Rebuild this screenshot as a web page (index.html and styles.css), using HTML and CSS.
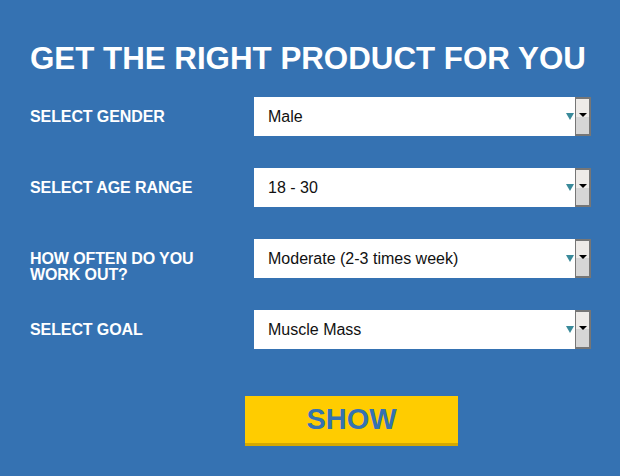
FILE: index.html
```html
<!DOCTYPE html>
<html lang="en">
<head>
  <meta charset="UTF-8" />
  <meta name="viewport" content="width=device-width, initial-scale=1.0"/>
  <title>Product Finder</title>
  <link rel="stylesheet" href="styles.css">
</head>
<body>
  <div class="finder">
    <h1>GET THE RIGHT PRODUCT FOR YOU</h1>

    <div class="form-grid">
      <label for="gender">SELECT GENDER</label>
      <div class="select">
        <select id="gender">
          <option>Male</option>
          <option>Female</option>
        </select>
        <span class="caret"></span>
        <span class="drop"><i></i></span>
      </div>

      <label for="age">SELECT AGE RANGE</label>
      <div class="select">
        <select id="age">
          <option>18 - 30</option>
          <option>31 - 45</option>
          <option>46+</option>
        </select>
        <span class="caret"></span>
        <span class="drop"><i></i></span>
      </div>

      <label for="often">HOW OFTEN DO YOU<br>WORK OUT?</label>
      <div class="select">
        <select id="often">
          <option>Moderate (2-3 times week)</option>
          <option>Rarely</option>
          <option>Often (4+ times week)</option>
        </select>
        <span class="caret"></span>
        <span class="drop"><i></i></span>
      </div>

      <label for="goal">SELECT GOAL</label>
      <div class="select">
        <select id="goal">
          <option>Muscle Mass</option>
          <option>Weight Loss</option>
          <option>Endurance</option>
        </select>
        <span class="caret"></span>
        <span class="drop"><i></i></span>
      </div>
    </div>

    <button class="show-btn">SHOW</button>
  </div>
</body>
</html>
```

FILE: styles.css
```css
body { margin: 0; background: #3572b2; font-family: 'Liberation Sans', Arial, sans-serif; color: #fff; }
.finder { padding: 40px 29px 0 30px; }
h1 { margin: 0; font-size: 31.3px; line-height: 37px; font-weight: bold; white-space: nowrap; }
.form-grid {
  display: grid; grid-template-columns: 224px 337px; grid-auto-rows: 39px;
  row-gap: 32px; margin-top: 20px;
}
.form-grid label {
  font-size: 16px; font-weight: bold; line-height: 16px; padding-top: 12px;
  letter-spacing: -0.1px; white-space: nowrap;
}
.select { display: flex; height: 39px; position: relative; }
.select select {
  flex: 1; appearance: none; -webkit-appearance: none; border: none; border-radius: 0;
  background: #fff; color: #111; font-family: 'Liberation Sans', Arial, sans-serif;
  font-size: 16px; padding: 0 0 0 14px; height: 39px; outline: none;
}
.caret {
  position: absolute; right: 17px; top: 16px; width: 0; height: 0;
  border-left: 4px solid transparent; border-right: 4px solid transparent;
  border-top: 7px solid #3a8a9a; pointer-events: none;
}
.drop {
  width: 13px; border: 2px solid #767676; border-left-width: 1px;
  background: linear-gradient(#eeebe8 0 50%, #d6d6d6 50% 100%);
  display: flex; justify-content: center; padding-top: 14px; box-sizing: content-box;
}
.drop i {
  width: 0; height: 0; border-left: 4px solid transparent; border-right: 4px solid transparent;
  border-top: 4px solid #000;
}
.show-btn {
  display: block; margin: 47px 0 0 215px; width: 213px; height: 50px;
  background: #ffcc00; border: none; border-bottom: 3px solid #d6a900;
  color: #3572b2; font-family: 'Liberation Sans', Arial, sans-serif;
  font-size: 29px; font-weight: bold; padding: 0; cursor: pointer;
}
```
